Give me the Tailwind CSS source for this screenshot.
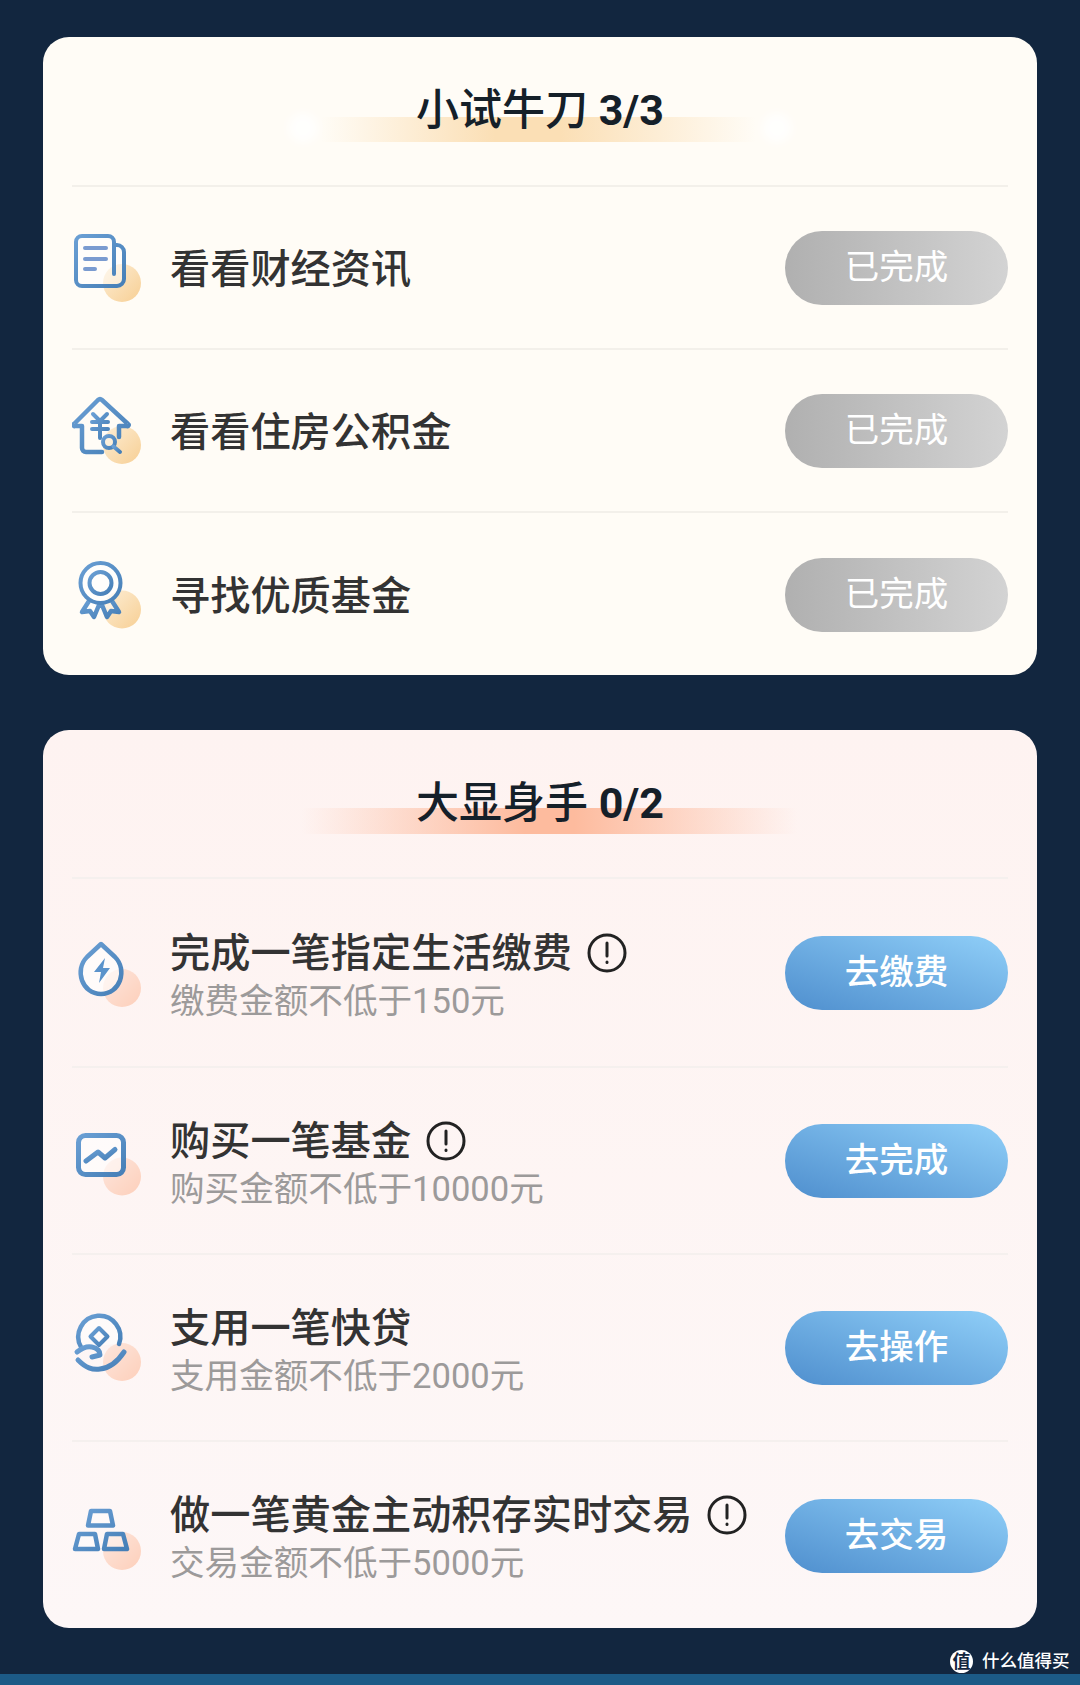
<!DOCTYPE html>
<html lang="zh-CN">
<head>
    <meta charset="UTF-8">
    <meta name="viewport" content="width=device-width, initial-scale=1.0">
    <title>任务列表</title>
    <script src="https://cdn.jsdelivr.net/npm/@tailwindcss/browser@4"></script>
</head>
<body class="relative h-[1685px] w-[1080px] overflow-hidden bg-[#12263f] font-['Roboto','Noto_Sans_CJK_SC',sans-serif]">
    <svg class="absolute h-0 w-0">
        <defs>
            <linearGradient id="stroke" x1="0" y1="0" x2="1" y2="1">
                <stop offset="0" stop-color="#6a9fd4"/>
                <stop offset="1" stop-color="#467fb7"/>
            </linearGradient>
            <linearGradient id="gold" x1="0" y1="0" x2="1" y2="1">
                <stop offset="0" stop-color="#fdeed6"/>
                <stop offset="1" stop-color="#f7cf94"/>
            </linearGradient>
            <linearGradient id="peach" x1="0" y1="0" x2="1" y2="1">
                <stop offset="0" stop-color="#fde6dd"/>
                <stop offset="1" stop-color="#fdcfba"/>
            </linearGradient>
        </defs>
    </svg>

    <div class="px-[43px] pt-[37px]">
        <!-- 小试牛刀 -->
        <section class="rounded-[26px] bg-[#fffcf6] px-[29px]">
            <header class="relative flex h-[150px] items-start justify-center border-b-2 border-[#f3f0ea] pt-[47px]">
                <div class="absolute left-[249px] top-[80px] h-[25px] w-[435px] bg-[linear-gradient(90deg,transparent,#fbdfb5_40%,#fbdfb5_55%,transparent)]"></div>
                <div class="absolute left-[216px] top-[76px] h-[30px] w-[30px] rounded-full bg-white/80 blur-[5px]"></div>
                <div class="absolute left-[690px] top-[76px] h-[30px] w-[30px] rounded-full bg-white/80 blur-[5px]"></div>
                <h2 class="relative text-[43px] leading-[52px] font-medium text-[#152029]">小试牛刀 <span class="font-bold">3/3</span></h2>
            </header>

            <div class="flex h-[163px] items-center border-b-2 border-[#f3f0ea]">
                <svg class="h-[72px] w-[72px] shrink-0" viewBox="0 0 72 72" fill="none" stroke="url(#stroke)" stroke-width="4" stroke-linecap="round" stroke-linejoin="round">
                    <circle cx="50" cy="51" r="19" fill="url(#gold)" stroke="none"/>
                    <path d="M42 13h3a7 7 0 0 1 7 7v27a7 7 0 0 1-7 7H10a6 6 0 0 1-6-6V10a6 6 0 0 1 6-6h26a6 6 0 0 1 6 6v32" fill="#fff" fill-opacity=".45"/>
                    <path d="M13 16h21M13 27h21M13 37h10" stroke="#7a9bd0"/>
                </svg>
                <span class="ml-[26px] flex-1 pt-[4px] text-[40.2px] leading-[52px] font-medium text-[#333]">看看财经资讯</span>
                <span class="flex h-[74px] w-[223px] items-center justify-center rounded-full bg-gradient-to-r from-[#b0b0b0] to-[#d3d3d3] text-[34.5px] text-white">已完成</span>
            </div>

            <div class="flex h-[163px] items-center border-b-2 border-[#f3f0ea]">
                <svg class="h-[72px] w-[72px] shrink-0" viewBox="0 0 72 72" fill="none" stroke="url(#stroke)" stroke-width="4" stroke-linecap="round" stroke-linejoin="round">
                    <circle cx="50" cy="50" r="19" fill="url(#gold)" stroke="none"/>
                    <path d="M30 57H14a4 4 0 0 1-4-4V31H3a1 1 0 0 1-1-2L26 5a3 3 0 0 1 4 0l26 24a1 1 0 0 1-1 2h-8v11" stroke-width="4.500"/>
                    <path d="M21 19l7 7 7-7M20 27h16M20 34h16M28 26v17"/>
                    <circle cx="37" cy="47" r="6" fill="#fff" fill-opacity=".4"/>
                    <path d="M41.500 51.500 48 57"/>
                </svg>
                <span class="ml-[26px] flex-1 pt-[4px] text-[40.2px] leading-[52px] font-medium text-[#333]">看看住房公积金</span>
                <span class="flex h-[74px] w-[223px] items-center justify-center rounded-full bg-gradient-to-r from-[#b0b0b0] to-[#d3d3d3] text-[34.5px] text-white">已完成</span>
            </div>

            <div class="flex h-[162px] items-center pt-px">
                <svg class="h-[72px] w-[72px] shrink-0" viewBox="0 0 72 72" fill="none" stroke="url(#stroke)" stroke-width="4" stroke-linecap="round" stroke-linejoin="round">
                    <circle cx="50" cy="50.500" r="19" fill="url(#gold)" stroke="none"/>
                    <path d="M17 42 10 53l8-1 4 6 5-12M40 42l7 11-8-1-4 6-5-12" stroke-width="4.500" fill="#fff" fill-opacity=".5"/>
                    <circle cx="28.500" cy="24" r="20" fill="#fff" fill-opacity=".7"/>
                    <circle cx="28.500" cy="24" r="11"/>
                </svg>
                <span class="ml-[26px] flex-1 pt-[4px] text-[40.2px] leading-[52px] font-medium text-[#333]">寻找优质基金</span>
                <span class="flex h-[74px] w-[223px] items-center justify-center rounded-full bg-gradient-to-r from-[#b0b0b0] to-[#d3d3d3] text-[34.5px] text-white">已完成</span>
            </div>
        </section>

        <!-- 大显身手 -->
        <section class="mt-[55px] rounded-[26px] bg-gradient-to-b from-[#fef3f1] to-[#fdf7f7] px-[29px]">
            <header class="relative flex h-[149px] items-start justify-center border-b-2 border-[#f5f0ee] pt-[47px]">
                <div class="absolute left-[230px] top-[78px] h-[26px] w-[495px] bg-[linear-gradient(90deg,transparent,#fdbb9e_45%,#fdbb9e_55%,transparent)]"></div>
                <h2 class="relative text-[43px] leading-[52px] font-medium text-[#152029]">大显身手 <span class="font-bold">0/2</span></h2>
            </header>

            <div class="flex h-[189px] items-center border-b-2 border-[#f5f0ee]">
                <svg class="h-[72px] w-[72px] shrink-0" viewBox="0 0 72 72" fill="none" stroke="url(#stroke)" stroke-width="4.500" stroke-linecap="round" stroke-linejoin="round">
                    <circle cx="50" cy="51" r="19" fill="url(#peach)" stroke="none"/>
                    <path d="M29 7 15 20c-13 13-5 37 14 37s27-24 14-37Z" fill="#fff" fill-opacity=".6"/>
                    <path d="M33 21 22 35h7l-2 11 11-15h-7Z" fill="#5b93cb" stroke="none"/>
                </svg>
                <div class="ml-[26px] flex-1 pt-[9px]">
                    <div class="flex items-center text-[40.2px] leading-[48px] font-medium text-[#333]">完成一笔指定生活缴费
                        <svg class="ml-[15px] -mt-[2px] h-[40px] w-[40px]" viewBox="0 0 40 40" fill="none" stroke="#222" stroke-width="3" stroke-linecap="round"><circle cx="20" cy="20" r="18"/><path d="M20 10v13M20 29v.5"/></svg>
                    </div>
                    <p class="-mt-px text-[34.6px] leading-[48px] text-[#9c9a9a]">缴费金额不低于150元</p>
                </div>
                <span class="flex h-[74px] w-[223px] items-center justify-center rounded-full bg-gradient-to-tr from-[#4f8fce] to-[#90cff8] text-[34.5px] font-medium text-white">去缴费</span>
            </div>

            <div class="flex h-[187px] items-center border-b-2 border-[#f5f0ee]">
                <svg class="h-[72px] w-[72px] shrink-0" viewBox="0 0 72 72" fill="none" stroke="url(#stroke)" stroke-width="5" stroke-linecap="round" stroke-linejoin="round">
                    <circle cx="50" cy="51.500" r="19" fill="url(#peach)" stroke="none"/>
                    <rect x="6.500" y="10.500" width="45" height="39" rx="7" fill="#fff" fill-opacity=".55"/>
                    <path d="m14 36 12-9 7 6 10-8.500"/>
                </svg>
                <div class="ml-[26px] flex-1 pt-[9px]">
                    <div class="flex items-center text-[40.2px] leading-[48px] font-medium text-[#333]">购买一笔基金
                        <svg class="ml-[15px] -mt-[2px] h-[40px] w-[40px]" viewBox="0 0 40 40" fill="none" stroke="#222" stroke-width="3" stroke-linecap="round"><circle cx="20" cy="20" r="18"/><path d="M20 10v13M20 29v.5"/></svg>
                    </div>
                    <p class="-mt-px text-[34.6px] leading-[48px] text-[#9c9a9a]">购买金额不低于10000元</p>
                </div>
                <span class="flex h-[74px] w-[223px] items-center justify-center rounded-full bg-gradient-to-tr from-[#4f8fce] to-[#90cff8] text-[34.5px] font-medium text-white">去完成</span>
            </div>

            <div class="flex h-[187px] items-center border-b-2 border-[#f5f0ee]">
                <svg class="h-[72px] w-[72px] shrink-0" viewBox="0 0 72 72" fill="none" stroke="url(#stroke)" stroke-width="4.500" stroke-linecap="round" stroke-linejoin="round">
                    <circle cx="50" cy="50" r="19" fill="url(#peach)" stroke="none"/>
                    <path d="M9 35A21 21 0 1 1 47 32" fill="#fff" fill-opacity=".5"/>
                    <path d="m27 16 8.500 8.500L27 33l-8.500-8.500Z" stroke-width="4"/>
                    <path d="M5 40c5-4 11-6 15-5 5 1 8 4 8 8l-8 2M6 48c8 8 14 10 22 9 10-1 18-8 24-17" stroke-width="5"/>
                </svg>
                <div class="ml-[26px] flex-1 pt-[9px]">
                    <div class="text-[40.2px] leading-[48px] font-medium text-[#333]">支用一笔快贷</div>
                    <p class="-mt-px text-[34.6px] leading-[48px] text-[#9c9a9a]">支用金额不低于2000元</p>
                </div>
                <span class="flex h-[74px] w-[223px] items-center justify-center rounded-full bg-gradient-to-tr from-[#4f8fce] to-[#90cff8] text-[34.5px] font-medium text-white">去操作</span>
            </div>

            <div class="flex h-[186px] items-center pt-px">
                <svg class="h-[72px] w-[72px] shrink-0" viewBox="0 0 72 72" fill="none" stroke="url(#stroke)" stroke-width="4.500" stroke-linecap="round" stroke-linejoin="round">
                    <circle cx="50" cy="51" r="19" fill="url(#peach)" stroke="none"/>
                    <path d="M19 11h19l3 14.500H16ZM7 34h16l3 15H3ZM35 34h16l4 15H32Z" fill="#fff" fill-opacity=".4"/>
                </svg>
                <div class="ml-[26px] flex-1 pt-[8px]">
                    <div class="flex items-center text-[40.2px] leading-[48px] font-medium text-[#333]">做一笔黄金主动积存实时交易
                        <svg class="ml-[15px] -mt-[2px] h-[40px] w-[40px]" viewBox="0 0 40 40" fill="none" stroke="#222" stroke-width="3" stroke-linecap="round"><circle cx="20" cy="20" r="18"/><path d="M20 10v13M20 29v.5"/></svg>
                    </div>
                    <p class="-mt-px text-[34.6px] leading-[48px] text-[#9c9a9a]">交易金额不低于5000元</p>
                </div>
                <span class="flex h-[74px] w-[223px] items-center justify-center rounded-full bg-gradient-to-tr from-[#4f8fce] to-[#90cff8] text-[34.5px] font-medium text-white">去交易</span>
            </div>
        </section>
    </div>

    <div class="mt-[46px] h-[11px] bg-[#1c5a86]"></div>

    <!-- watermark -->
    <div class="absolute left-[950px] top-[1650px] flex items-center">
        <span class="flex h-[23px] w-[23px] items-center justify-center rounded-full bg-white text-[18px] font-bold leading-none text-[#12263f]">值</span>
        <span class="ml-[9px] text-[17.5px] leading-[23px] font-medium text-white">什么值得买</span>
    </div>
</body>
</html>
